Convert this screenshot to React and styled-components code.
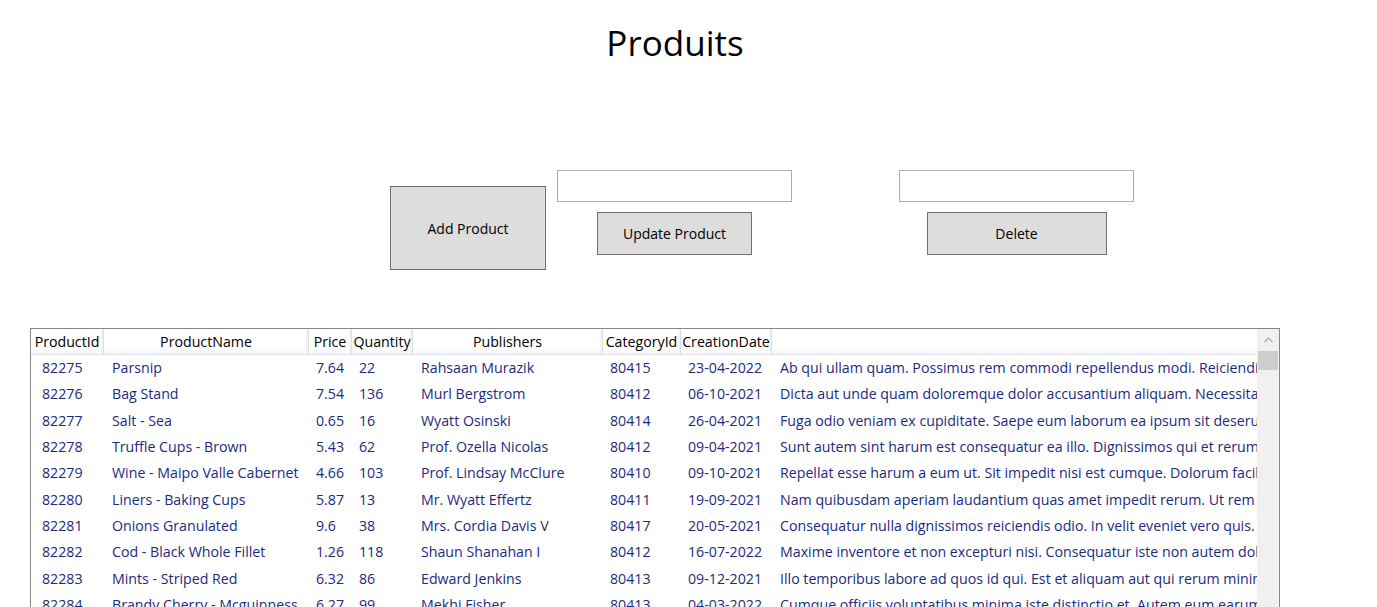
import React from 'react';
import styled, { createGlobalStyle } from 'styled-components';

const GlobalStyle = createGlobalStyle`
  html, body {
    margin: 0;
    padding: 0;
    background: #ffffff;
    overflow: hidden;
  }
  body {
    font-family: "Open Sans", "Noto Sans", sans-serif;
    color: #000000;
  }
`;

const columns = [
    { key: 'id', title: 'ProductId', width: 73, pad: 11 },
    { key: 'name', title: 'ProductName', width: 205, pad: 8 },
    { key: 'price', title: 'Price', width: 43, pad: 7 },
    { key: 'qty', title: 'Quantity', width: 61, pad: 7 },
    { key: 'publisher', title: 'Publishers', width: 190, pad: 8 },
    { key: 'category', title: 'CategoryId', width: 78, pad: 7 },
    { key: 'date', title: 'CreationDate', width: 91, pad: 7 },
    { key: 'desc', title: '', width: 0, pad: 8 },
]

const products = [
    { id: 82275, name: 'Parsnip', price: '7.64', qty: 22, publisher: 'Rahsaan Murazik', category: 80415, date: '23-04-2022', desc: 'Ab qui ullam quam. Possimus rem commodi repellendus modi. Reiciendis quia dolorem et.' },
    { id: 82276, name: 'Bag Stand', price: '7.54', qty: 136, publisher: 'Murl Bergstrom', category: 80412, date: '06-10-2021', desc: 'Dicta aut unde quam doloremque dolor accusantium aliquam. Necessitatibus et quia.' },
    { id: 82277, name: 'Salt - Sea', price: '0.65', qty: 16, publisher: 'Wyatt Osinski', category: 80414, date: '26-04-2021', desc: 'Fuga odio veniam ex cupiditate. Saepe eum laborum ea ipsum sit deserunt quia.' },
    { id: 82278, name: 'Truffle Cups - Brown', price: '5.43', qty: 62, publisher: 'Prof. Ozella Nicolas', category: 80412, date: '09-04-2021', desc: 'Sunt autem sint harum est consequatur ea illo. Dignissimos qui et rerum nihil.' },
    { id: 82279, name: 'Wine - Maipo Valle Cabernet', price: '4.66', qty: 103, publisher: 'Prof. Lindsay McClure', category: 80410, date: '09-10-2021', desc: 'Repellat esse harum a eum ut. Sit impedit nisi est cumque. Dolorum facilis ut.' },
    { id: 82280, name: 'Liners - Baking Cups', price: '5.87', qty: 13, publisher: 'Mr. Wyatt Effertz', category: 80411, date: '19-09-2021', desc: 'Nam quibusdam aperiam laudantium quas amet impedit rerum. Ut rem quia eos.' },
    { id: 82281, name: 'Onions Granulated', price: '9.6', qty: 38, publisher: 'Mrs. Cordia Davis V', category: 80417, date: '20-05-2021', desc: 'Consequatur nulla dignissimos reiciendis odio. In velit eveniet vero quis. Et qui.' },
    { id: 82282, name: 'Cod - Black Whole Fillet', price: '1.26', qty: 118, publisher: 'Shaun Shanahan I', category: 80412, date: '16-07-2022', desc: 'Maxime inventore et non excepturi nisi. Consequatur iste non autem dolores.' },
    { id: 82283, name: 'Mints - Striped Red', price: '6.32', qty: 86, publisher: 'Edward Jenkins', category: 80413, date: '09-12-2021', desc: 'Illo temporibus labore ad quos id qui. Est et aliquam aut qui rerum minima.' },
    { id: 82284, name: 'Brandy Cherry - Mcguinness', price: '6.27', qty: 99, publisher: 'Mekhi Fisher', category: 80413, date: '04-03-2022', desc: 'Cumque officiis voluptatibus minima iste distinctio et. Autem eum earum sed.' },
]

const Page = styled.div`
  display: flex;
  flex-direction: column;
  width: 1377px;
  height: 607px;
`;

const Title = styled.h1`
  margin: 0;
  padding-top: 22px;
  padding-right: 27px;
  font-size: 35px;
  font-weight: 400;
  line-height: 42px;
  text-align: center;
`;

const Controls = styled.div`
  display: flex;
  align-items: flex-start;
  margin-top: 106px;
  margin-left: 390px;
`;

const Group = styled.div`
  display: flex;
  flex-direction: column;
  align-items: center;
  gap: 10px;
  margin-left: ${p => p.$offset}px;
`;

const Button = styled.button`
  box-sizing: border-box;
  width: ${p => p.$w}px;
  height: ${p => p.$h}px;
  margin-top: ${p => p.$top || 0}px;
  padding: 0;
  background: #dddddd;
  border: 1px solid #707070;
  font-family: "Open Sans", "Noto Sans", sans-serif;
  font-size: 14px;
  color: #000000;
`;

const TextBox = styled.input`
  box-sizing: border-box;
  width: 235px;
  height: 32px;
  margin: 0;
  border: 1px solid #abadb3;
  background: #ffffff;
  outline: none;
`;

const Grid = styled.div`
  box-sizing: border-box;
  display: flex;
  width: 1250px;
  height: 320px;
  margin-top: 58px;
  margin-left: 30px;
  border: 1px solid #828790;
  background: #ffffff;
`;

const GridBody = styled.div`
  flex: 1;
  min-width: 0;
  overflow: hidden;
  font-size: 14.2px;
`;

const HeaderRow = styled.div`
  display: flex;
  height: 26px;
  box-sizing: border-box;
  border-bottom: 1px solid #e2e3ea;
  background: linear-gradient(#ffffff 0%, #ffffff 70%, #f6f7f9 100%);
`;

const HeaderCell = styled.div`
  box-sizing: border-box;
  flex: ${p => (p.$w ? `0 0 ${p.$w}px` : '1 0 auto')};
  display: flex;
  align-items: center;
  justify-content: center;
  white-space: nowrap;
  color: #000000;
  border-right: ${p => (p.$w ? '1px solid #dcdde3' : 'none')};
  box-shadow: ${p => (p.$w ? 'inset -2px 0 0 #f3f4f6' : 'none')};
`;

const Row = styled.div`
  display: flex;
  box-sizing: border-box;
  height: 26.33px;
  padding-bottom: 1px;
  align-items: center;
  white-space: nowrap;
`;

const Cell = styled.div`
  box-sizing: border-box;
  flex: ${p => (p.$w ? `0 0 ${p.$w}px` : '1 0 auto')};
  padding-left: ${p => p.$pad}px;
  overflow: hidden;
  color: #1b2a7e;
`;

const ScrollBar = styled.div`
  display: flex;
  flex-direction: column;
  width: 21px;
  background: #f0f0f0;
  border-left: 1px solid #f0f0f0;
`;

const ScrollArrow = styled.div`
  height: 22px;
  display: flex;
  align-items: center;
  justify-content: center;
`;

const ScrollThumb = styled.div`
  height: 19px;
  margin-right: 1px;
  background: #cdcdcd;
`;

function App() {
    return (
        <Page>
            <GlobalStyle />
            <Title>Produits</Title>
            <Controls>
                <Button $w={156} $h={84} $top={16}>Add Product</Button>
                <Group $offset={11}>
                    <TextBox />
                    <Button $w={155} $h={43}>Update Product</Button>
                </Group>
                <Group $offset={107}>
                    <TextBox />
                    <Button $w={180} $h={43}>Delete</Button>
                </Group>
            </Controls>
            <Grid>
                <GridBody>
                    <HeaderRow>
                        {columns.map(c => (
                            <HeaderCell key={c.key} $w={c.width}>{c.title}</HeaderCell>
                        ))}
                    </HeaderRow>
                    {products.map(p => (
                        <Row key={p.id}>
                            {columns.map(c => (
                                <Cell key={c.key} $w={c.width} $pad={c.pad}>{p[c.key]}</Cell>
                            ))}
                        </Row>
                    ))}
                </GridBody>
                <ScrollBar>
                    <ScrollArrow>
                        <svg width="9" height="6" viewBox="0 0 9 6">
                            <path d="M0.5 5 L4.5 1 L8.5 5" fill="none" stroke="#a3a3a3" strokeWidth="1.2" />
                        </svg>
                    </ScrollArrow>
                    <ScrollThumb />
                </ScrollBar>
            </Grid>
        </Page>
    );
}

export default App;
